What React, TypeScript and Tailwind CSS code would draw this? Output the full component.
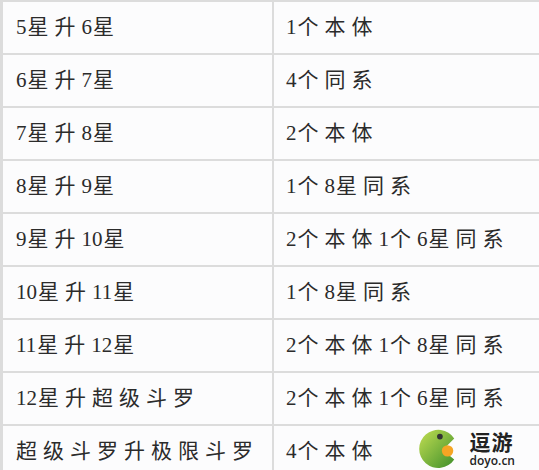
import React from 'react';

const rows = [
  ['5星升6星', '1个本体'],
  ['6星升7星', '4个同系'],
  ['7星升8星', '2个本体'],
  ['8星升9星', '1个8星同系'],
  ['9星升10星', '2个本体1个6星同系'],
  ['10星升11星', '1个8星同系'],
  ['11星升12星', '2个本体1个8星同系'],
  ['12星升超级斗罗', '2个本体1个6星同系'],
  ['超级斗罗升极限斗罗', '4个本体'],
];

// digits stay tight, CJK characters get the wide spacing of the source
const Spaced = ({ text }: { text: string }) => {
  const parts = text.match(/\d+|[^\d]/g) || [];
  return (
    <>
      {parts.map((p, i) =>
        /\d/.test(p) ? (
          <span key={i} className="mr-[1px]">{p}</span>
        ) : (
          <span key={i} className="mr-[6px]">{p}</span>
        )
      )}
    </>
  );
};

const Logo = () => (
  <div className="absolute right-[24px] bottom-[1px] flex items-center gap-[10px]">
    <svg width="44" height="42" viewBox="0 0 46 44">
      <defs>
        <linearGradient id="pg" x1="0" y1="0" x2="1" y2="1">
          <stop offset="0" stopColor="#c2de52" />
          <stop offset="1" stopColor="#3f8f2b" />
        </linearGradient>
      </defs>
      <path d="M40 12 A20 20 0 1 0 40 34 L28 24 Z" fill="url(#pg)" />
      <circle cx="33" cy="25" r="6" fill="#f5a524" />
      <circle cx="25" cy="10" r="3" fill="#333" />
    </svg>
    <div className="flex flex-col gap-[2px]" style={{ fontFamily: '"Noto Sans CJK SC", sans-serif' }}>
      <span className="text-[21px] leading-[22px] font-bold text-[#222] tracking-[1px]">逗游</span>
      <span className="text-[12px] leading-[13px] text-[#222] font-semibold" style={{ fontFamily: '"Open Sans", sans-serif' }}>doyo.cn</span>
    </div>
  </div>
);

export default function App() {
  return (
    <div
      className="relative w-[539px] h-[470px] overflow-hidden bg-[#fcfcfd] border-l-[3px] border-[#dcdcdc] text-[#2b2b2b]"
      style={{ fontFamily: '"Liberation Serif", "Noto Sans CJK SC", serif' }}
    >
      {rows.map(([a, b], i) => (
        <div key={i} className="flex h-[53px] border-t-2 border-[#dcdcdc]">
          <div className="w-[271px] flex items-center pl-[13px] text-[21px] border-r-2 border-[#dcdcdc]">
            <Spaced text={a} />
          </div>
          <div className="flex-1 flex items-center pl-[12px] text-[21px]">
            <Spaced text={b} />
          </div>
        </div>
      ))}
      <Logo />
    </div>
  );
}
